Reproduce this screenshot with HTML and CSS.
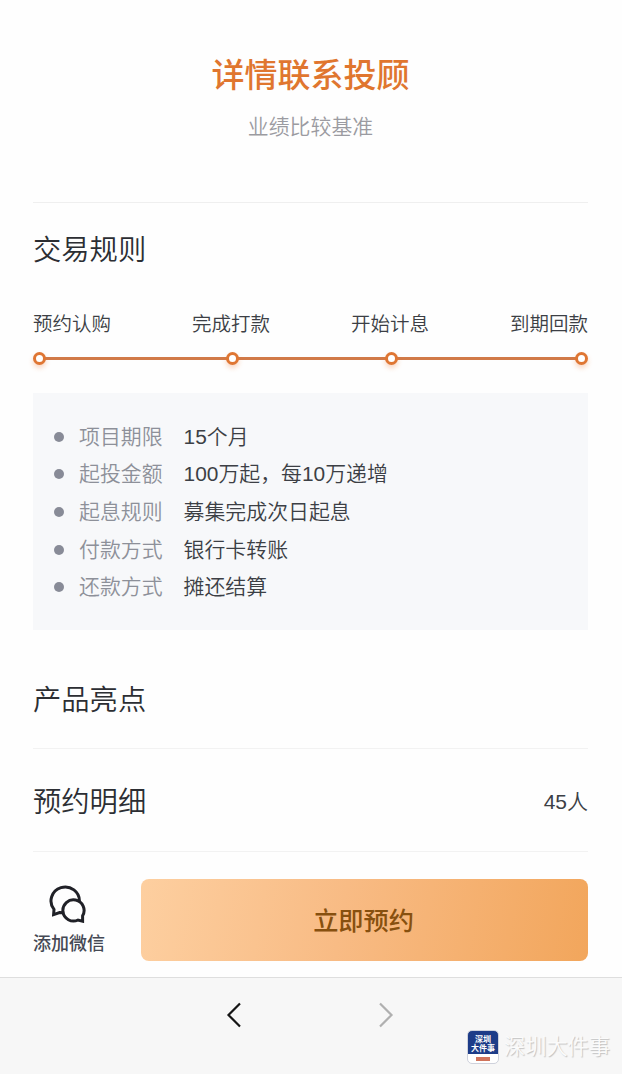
FILE: index.html
```
<!DOCTYPE html>
<html lang="zh-CN">
  <head>
    <meta charset="UTF-8" />
    <meta name="viewport" content="width=device-width, initial-scale=1.0" />
    <title>产品详情</title>
    <link rel="stylesheet" href="styles.css">
  </head>
  <body>
    <main class="content">
      <header class="summary">
        <h1>详情联系投顾</h1>
        <p>业绩比较基准</p>
      </header>

      <section class="rules">
        <h2>交易规则</h2>
        <ol class="steps">
          <li>预约认购</li>
          <li>完成打款</li>
          <li>开始计息</li>
          <li>到期回款</li>
        </ol>
        <ul class="details">
          <li><span class="name">项目期限</span><span>15个月</span></li>
          <li><span class="name">起投金额</span><span>100万起，每10万递增</span></li>
          <li><span class="name">起息规则</span><span>募集完成次日起息</span></li>
          <li><span class="name">付款方式</span><span>银行卡转账</span></li>
          <li><span class="name">还款方式</span><span>摊还结算</span></li>
        </ul>
      </section>

      <section class="row highlights">
        <h2>产品亮点</h2>
      </section>
      <section class="row">
        <h2>预约明细</h2>
        <span class="count">45人</span>
      </section>
    </main>

    <div class="actions">
      <a class="wechat">
        <svg width="38" height="38" viewBox="0 0 38 38" fill="none" stroke="#202127" stroke-width="3" stroke-linejoin="miter">
          <path d="M16.2 27.8L11.6 27.6L5.6 29.6L6 24.4A14.2 13.9 0 1 1 31.4 16.6" />
          <path d="M34.6 30.8L34.6 36.2L30 35A10.6 10.6 0 1 1 34.6 30.8Z" />
        </svg>
        <span>添加微信</span>
      </a>
      <button class="book">立即预约</button>
    </div>

    <nav class="toolbar">
      <svg width="16" height="28" viewBox="0 0 16 28" fill="none" stroke="#151515" stroke-width="2.2">
        <path d="M14 2.4L2.5 14L14 25.6" />
      </svg>
      <svg width="16" height="28" viewBox="0 0 16 28" fill="none" stroke="#b0b0b0" stroke-width="2.2">
        <path d="M2 2.4L13.5 14L2 25.6" />
      </svg>
      <div class="watermark">
        <div class="logo">
          <span>深圳</span>
          <span>大件事</span>
          <i></i>
        </div>
        <span class="source">深圳大件事</span>
      </div>
    </nav>
  </body>
</html>
```
FILE: styles.css
```
*,
*::before,
*::after {
  box-sizing: border-box;
}
body {
  margin: 0;
  height: 1074px;
  display: flex;
  flex-direction: column;
  overflow: hidden;
  background: #fefefe;
  color: #3c3f45;
  font-family: "Liberation Sans", "Noto Sans CJK SC", sans-serif;
}
h1,
h2,
p,
ol,
ul {
  margin: 0;
  padding: 0;
  list-style: none;
}
h2 {
  color: #2c2e33;
  font-size: 28.3px;
  font-weight: 350;
  line-height: 42px;
}
.content {
  padding: 0 34px 0 33px;
}
.summary {
  height: 203px;
  padding-top: 52px;
  border-bottom: 1px solid #efefef;
  text-align: center;
}
.summary h1 {
  color: #e0762f;
  font-size: 33px;
  font-weight: 500;
  line-height: 48px;
}
.summary p {
  margin-top: 12px;
  color: #9b9ba1;
  font-size: 20.9px;
  font-weight: 350;
  line-height: 30px;
}
.rules {
  padding-top: 26px;
}

/* progress line */
.steps {
  display: flex;
  justify-content: space-between;
  margin-top: 38px;
  background: linear-gradient(#d17a48, #d17a48) 6px 48px / 543px 3px no-repeat;
}
.steps li {
  display: flex;
  flex-direction: column;
  align-items: center;
  font-size: 19.5px;
  font-weight: 350;
  line-height: 30px;
}
.steps li::after {
  content: "";
  width: 13px;
  height: 13px;
  margin: 13px 0 0 3px;
  border: 3px solid #df7633;
  border-radius: 50%;
  background: #fff;
  box-shadow: 0 3px 5px rgba(240, 120, 50, 0.3);
}
.steps li:first-child::after {
  align-self: flex-start;
  margin-left: 0;
}
.steps li:last-child::after {
  align-self: flex-end;
}

.details {
  height: 237px;
  margin-top: 28px;
  padding: 23px 21px;
  background: #f7f8fa;
}
.details li {
  display: flex;
  align-items: center;
  height: 37.6px;
  font-size: 20.9px;
  font-weight: 350;
}
.details li::before {
  content: "";
  width: 10px;
  height: 10px;
  margin: 4px 15px 0 0;
  border-radius: 50%;
  background: #888b97;
}
.details .name {
  margin-right: 21px;
  color: #8d9099;
}

.row {
  display: flex;
  align-items: center;
  justify-content: space-between;
  height: 103px;
  padding-top: 3px;
  border-bottom: 1px solid #f2f2f2;
}
.highlights {
  height: 119px;
  padding-top: 22px;
}
.count {
  margin-top: -4px;
  font-size: 21px;
  font-weight: 350;
}

.actions {
  display: flex;
  align-items: center;
  gap: 36px;
  height: 125px;
  padding: 11px 34px 0 33px;
}
.wechat {
  display: flex;
  flex-direction: column;
  align-items: center;
  width: 72px;
  gap: 7px;
  padding-top: 3px;
  color: #454954;
  font-size: 18px;
  font-weight: 500;
  line-height: 28px;
}
.wechat svg {
  margin-left: -4px;
}
.book {
  flex: 1;
  height: 82px;
  padding: 0 2px 2px 0;
  border: 0;
  border-radius: 8px;
  background: linear-gradient(100deg, #fdcfa0, #f8bb84 45%, #f2a65c);
  color: #87500f;
  font-family: inherit;
  font-size: 25.2px;
  font-weight: 500;
}

.toolbar {
  position: relative;
  flex: 1;
  display: flex;
  justify-content: center;
  gap: 136px;
  padding: 23px 2px 0 0;
  border-top: 1px solid #dedede;
  background: #f7f7f7;
}
.watermark {
  position: absolute;
  right: 12px;
  bottom: 10px;
  display: flex;
  align-items: center;
  gap: 5px;
}
.logo {
  display: flex;
  flex-direction: column;
  align-items: center;
  width: 32px;
  height: 34px;
  padding-top: 4px;
  border: 1px solid #cfd2dc;
  border-radius: 5px;
  background: linear-gradient(#1d3c88 73%, #fff 73%);
  color: #fff;
  font-size: 8px;
  font-weight: 700;
  line-height: 9px;
  white-space: nowrap;
}
.logo i {
  width: 14px;
  height: 4px;
  margin-top: 4px;
  background: #d0745c;
}
.source {
  color: #fbfbfb;
  font-size: 21.2px;
  font-weight: 350;
  line-height: 32px;
  text-shadow: 1px 1px 1px #c2c2c2;
}
```
